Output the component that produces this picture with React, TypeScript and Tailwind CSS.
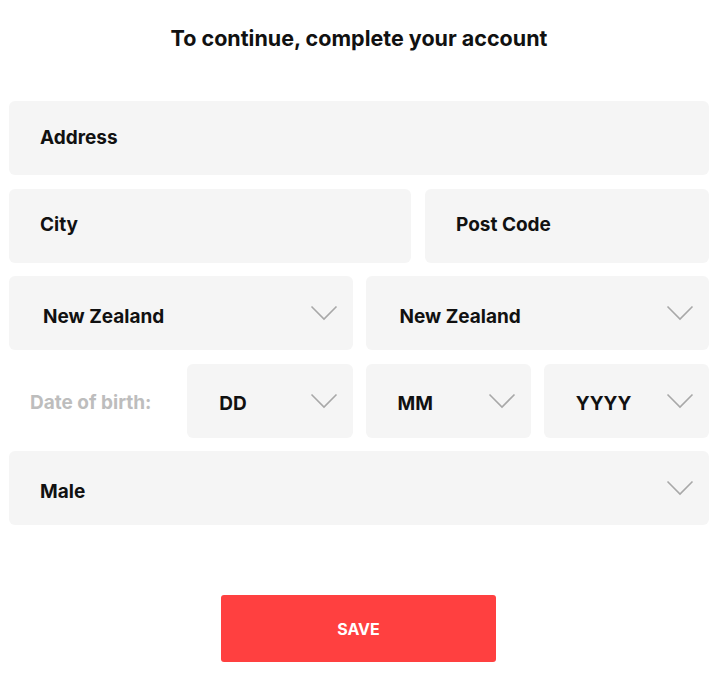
import React from "react";

const Chevron = () => (
  <svg width="28" height="16" viewBox="0 0 28 16" fill="none" className="shrink-0">
    <path d="M1.5 1.5 L14 14 L26.5 1.5" stroke="#a8a8a8" strokeWidth="1.6" />
  </svg>
);

const Field = ({ label, className = "", pl = "pl-[31px]" }: { label: string; className?: string; pl?: string }) => (
  <div className={`h-[74px] rounded-md bg-[#f5f5f5] flex items-center ${pl} ${className}`}>
    <span className="text-[19px] font-bold text-[#111]">{label}</span>
  </div>
);

const Select = ({ label, className = "", pl = "pl-[32px]" }: { label: string; className?: string; pl?: string }) => (
  <div className={`h-[74px] rounded-md bg-[#f5f5f5] flex items-center justify-between pr-[15px] ${pl} ${className}`}>
    <span className="text-[19px] font-bold text-[#111] pt-[8px]">{label}</span>
    <Chevron />
  </div>
);

export default function App() {
  return (
    <div className="w-[724px] h-[676px] bg-white pl-[9px] pr-[15px]" style={{ fontFamily: "Inter, 'Noto Sans', sans-serif" }}>
      <h1 className="text-center text-[21.5px] font-bold text-[#111] pt-[22px] h-[101px]">
        To continue, complete your account
      </h1>
      <div className="flex flex-col gap-[13.5px]">
        <Field label="Address" />
        <div className="flex gap-[14px]">
          <Field label="City" className="w-[402px]" />
          <Field label="Post Code" className="flex-1" />
        </div>
        <div className="grid grid-cols-4 gap-[13px]">
          <Select label="New Zealand" className="col-span-2" pl="pl-[34px]" />
          <Select label="New Zealand" className="col-span-2" pl="pl-[34px]" />
        </div>
        <div className="grid grid-cols-4 gap-[13px]">
          <div className="h-[74px] flex items-center pl-[21px]">
            <span className="text-[19px] font-bold text-[#bdbdbd] pt-[5px]">Date of birth:</span>
          </div>
          <Select label="DD" />
          <Select label="MM" />
          <Select label="YYYY" />
        </div>
        <Select label="Male" pl="pl-[31px]" />
      </div>
      <div className="flex justify-center pt-[70px] pr-[1px]">
        <button className="w-[275px] h-[67px] rounded-[3px] bg-[#ff4040] text-white text-[16px] font-bold">
          SAVE
        </button>
      </div>
    </div>
  );
}
